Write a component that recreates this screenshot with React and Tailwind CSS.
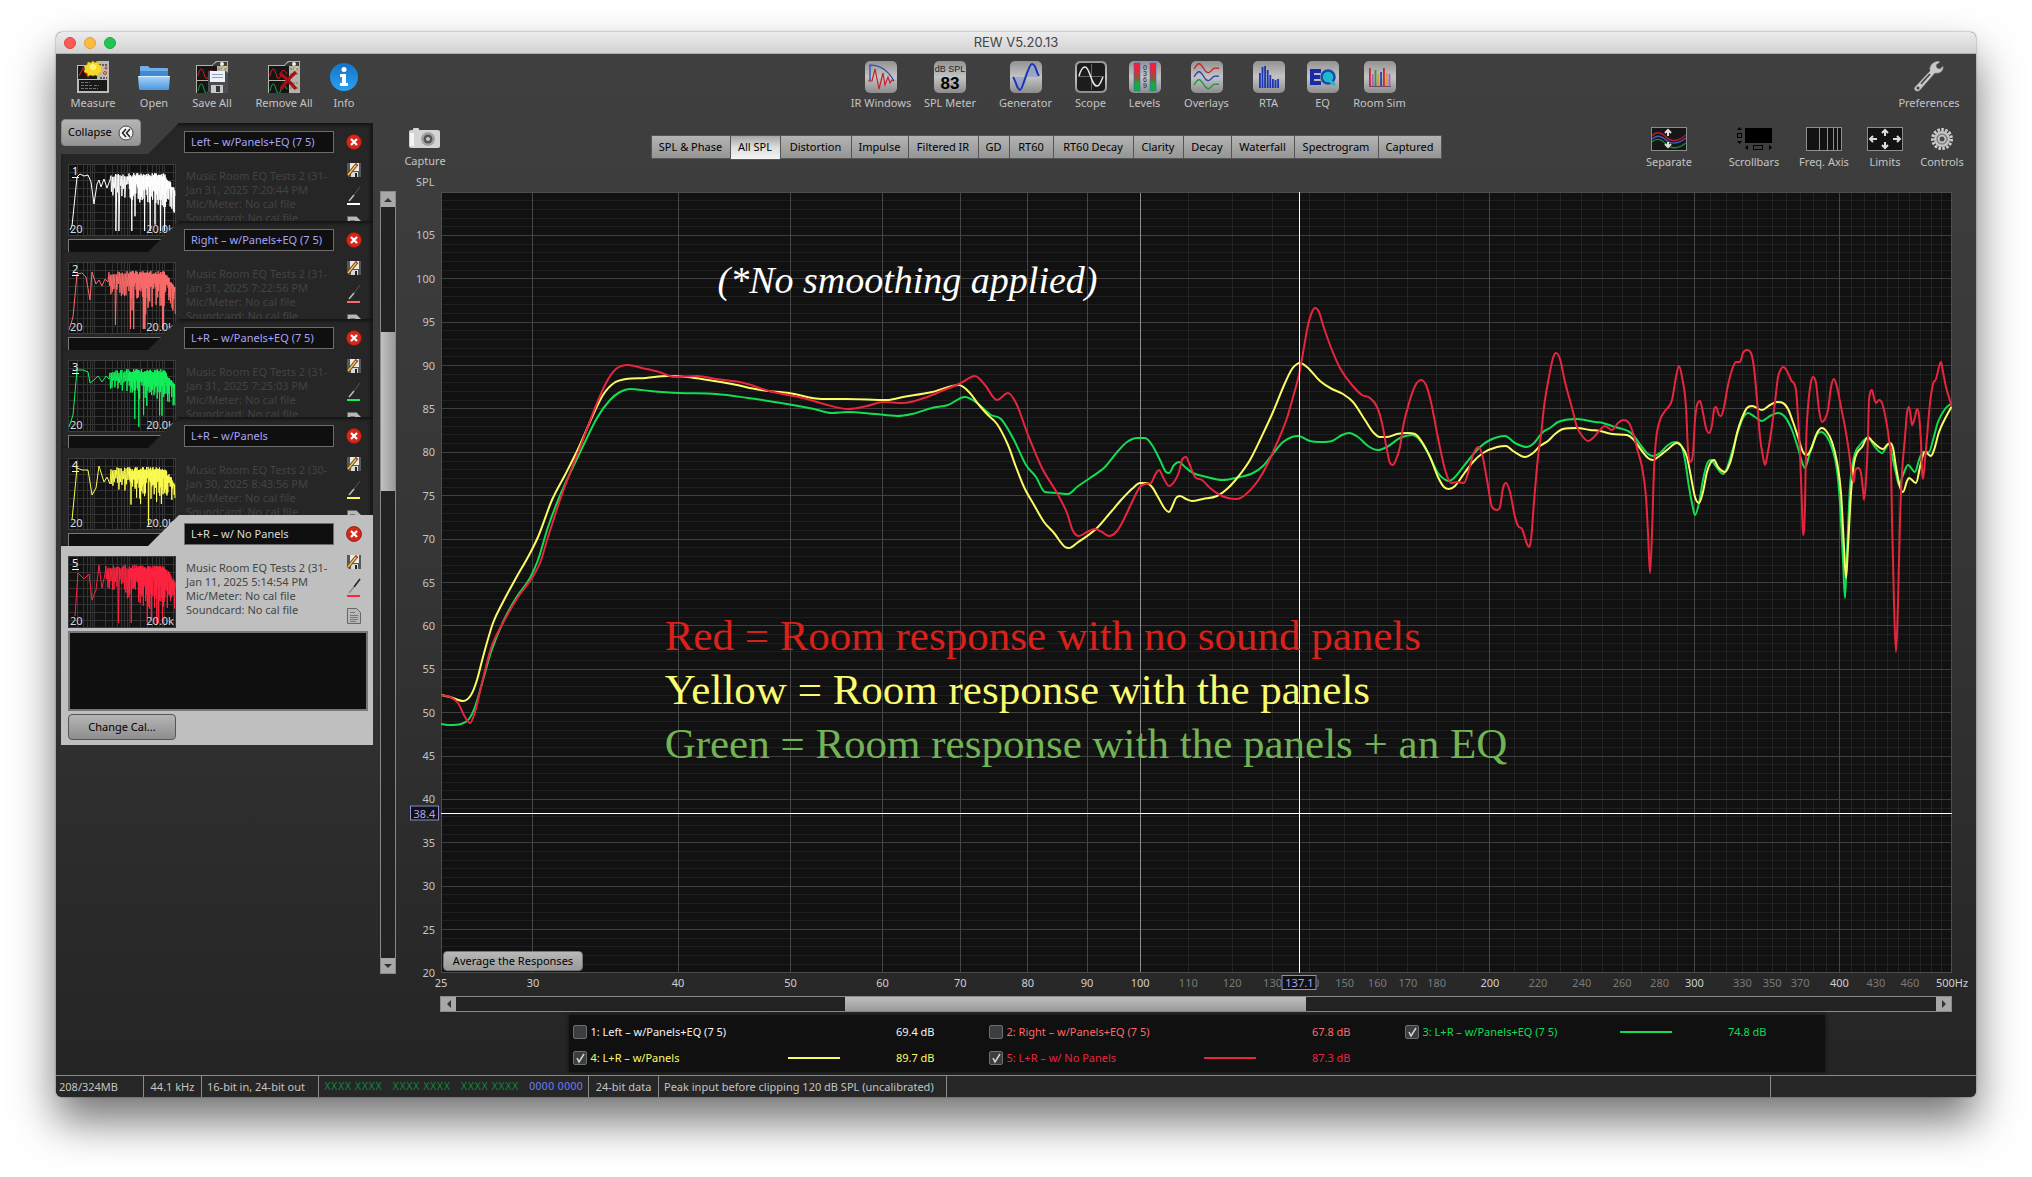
import React, { useState } from 'react';

const RED = '#e8253f';
const YELLOW = '#fbfb66';
const GREEN = '#12dd54';

/* ---------- chart data, in plot units (1511 x 781) ---------- */

const redCurve = [
  [0, 503], [9, 505], [17, 511], [24, 525], [29, 531], [34, 520], [40, 495], [50, 456], [62, 431], [77, 405], [91, 386], [99, 371],
  [107, 345], [120, 305], [130, 278], [140, 253], [152, 221], [165, 191], [175, 177], [187, 173], [201, 176], [218, 180], [234, 185],
  [256, 184], [275, 187], [303, 191], [328, 199], [362, 206], [383, 212], [407, 217], [426, 214], [442, 210], [462, 211], [483, 206],
  [503, 198], [520, 191], [534, 184], [544, 193], [556, 208], [567, 201], [575, 211], [587, 243], [601, 276], [616, 301], [626, 321],
  [632, 339], [638, 344], [646, 340], [654, 337], [661, 340], [668, 344], [676, 339], [684, 325], [691, 310], [699, 295], [704, 292],
  [710, 291], [714, 283], [718, 278], [722, 285], [728, 294], [733, 290], [738, 280], [741, 268], [745, 265], [748, 271], [754, 285],
  [761, 288], [769, 296], [779, 303], [787, 306], [796, 307], [804, 303], [816, 290], [826, 273], [836, 251], [846, 226], [854, 198],
  [858, 183], [862, 161], [867, 133], [871, 120], [874, 116], [878, 120], [882, 133], [889, 153], [899, 176], [911, 193], [921, 203],
  [929, 206], [936, 215], [941, 231], [946, 258], [949, 271], [952, 273], [954, 270], [959, 255], [962, 235], [968, 211], [974, 194],
  [980, 188], [985, 193], [990, 210], [996, 241], [1001, 265], [1005, 281], [1010, 291], [1016, 290], [1023, 291], [1027, 281],
  [1032, 263], [1037, 255], [1041, 262], [1046, 288], [1051, 315], [1056, 318], [1059, 315], [1062, 296], [1065, 291], [1069, 300],
  [1074, 325], [1077, 334], [1081, 337], [1086, 352], [1088, 355], [1090, 348], [1093, 310], [1097, 265], [1100, 243], [1103, 215],
  [1107, 190], [1112, 166], [1115, 161], [1119, 167], [1124, 190], [1131, 216], [1136, 235], [1142, 245], [1147, 249], [1152, 246],
  [1158, 239], [1164, 234], [1171, 238], [1177, 231], [1182, 228], [1188, 231], [1192, 241], [1197, 260], [1201, 275], [1205, 305],
  [1207, 341], [1209, 381], [1211, 341], [1213, 278], [1215, 248], [1219, 228], [1224, 219], [1231, 208], [1235, 185], [1238, 174],
  [1241, 185], [1245, 215], [1247, 258], [1249, 270], [1252, 261], [1254, 228], [1256, 213], [1259, 209], [1262, 221], [1265, 236],
  [1268, 241], [1271, 233], [1273, 218], [1275, 215], [1278, 223], [1280, 224], [1283, 215], [1287, 193], [1292, 175], [1295, 170],
  [1299, 170], [1302, 161], [1306, 158], [1310, 161], [1313, 176], [1316, 208], [1319, 245], [1322, 265], [1324, 273], [1326, 265],
  [1330, 241], [1334, 210], [1337, 185], [1340, 177], [1342, 175], [1346, 179], [1350, 188], [1355, 198], [1357, 225], [1359, 261],
  [1361, 315], [1362, 343], [1364, 315], [1365, 255], [1367, 215], [1370, 190], [1372, 185], [1375, 191], [1378, 218], [1381, 230],
  [1384, 227], [1387, 218], [1390, 195], [1393, 187], [1396, 195], [1400, 215], [1404, 235], [1408, 260], [1411, 285], [1413, 290],
  [1414, 279], [1417, 276], [1420, 281], [1422, 298], [1423, 308], [1425, 288], [1427, 245], [1428, 208], [1431, 198], [1433, 206],
  [1435, 211], [1438, 208], [1441, 211], [1445, 228], [1448, 248], [1450, 271], [1451, 328], [1453, 411], [1455, 460], [1457, 411],
  [1459, 328], [1461, 281], [1464, 245], [1466, 221], [1468, 215], [1470, 226], [1471, 233], [1474, 225], [1476, 217], [1478, 223],
  [1480, 251], [1481, 278], [1482, 287], [1484, 268], [1486, 245], [1489, 211], [1492, 192], [1495, 187], [1498, 175], [1500, 170],
  [1502, 180], [1505, 195], [1511, 215],
];

const yellowCurve = [
  [0, 503], [9, 505], [22, 509], [30, 503], [36, 488], [42, 465], [52, 431], [62, 410], [75, 386], [87, 365], [97, 345], [111, 308],
  [124, 283], [138, 255], [152, 223], [162, 203], [173, 191], [185, 187], [205, 186], [226, 184], [246, 185], [267, 188], [291, 192],
  [320, 198], [348, 201], [381, 207], [405, 207], [446, 208], [462, 205], [491, 200], [518, 193], [528, 200], [538, 213], [546, 222],
  [556, 232], [567, 253], [575, 275], [583, 295], [593, 313], [603, 330], [613, 341], [624, 355], [628, 356], [636, 351], [656, 336],
  [669, 321], [681, 307], [692, 296], [699, 291], [705, 291], [711, 295], [717, 305], [724, 317], [728, 320], [731, 315], [735, 306],
  [739, 304], [745, 307], [751, 309], [762, 307], [776, 304], [786, 297], [797, 285], [809, 268], [819, 248], [832, 220], [844, 191],
  [851, 177], [856, 172], [859, 171], [866, 175], [879, 189], [891, 197], [902, 202], [912, 210], [924, 228], [932, 240], [939, 245],
  [946, 245], [956, 242], [966, 241], [974, 242], [981, 250], [989, 265], [997, 285], [1003, 295], [1008, 297], [1014, 294],
  [1022, 283], [1032, 270], [1042, 261], [1056, 255], [1065, 254], [1072, 259], [1084, 265], [1092, 261], [1099, 254], [1107, 249],
  [1114, 242], [1122, 237], [1136, 236], [1149, 238], [1159, 239], [1171, 242], [1186, 243], [1192, 247], [1201, 259], [1207, 266],
  [1212, 268], [1217, 265], [1226, 258], [1236, 251], [1241, 255], [1246, 265], [1250, 285], [1254, 305], [1258, 311], [1262, 300],
  [1266, 280], [1270, 270], [1273, 268], [1277, 275], [1284, 280], [1289, 271], [1292, 260], [1296, 241], [1301, 226], [1306, 216],
  [1311, 214], [1321, 218], [1329, 213], [1336, 210], [1342, 211], [1347, 217], [1352, 230], [1357, 245], [1362, 260], [1366, 263],
  [1371, 255], [1376, 241], [1381, 236], [1386, 240], [1391, 250], [1396, 270], [1400, 301], [1403, 355], [1405, 386], [1407, 355],
  [1410, 301], [1413, 271], [1416, 261], [1421, 255], [1427, 245], [1432, 250], [1442, 257], [1446, 253], [1449, 251], [1452, 256],
  [1455, 275], [1459, 295], [1462, 300], [1466, 289], [1468, 286], [1475, 291], [1479, 275], [1482, 263], [1484, 260], [1490, 264],
  [1493, 258], [1498, 240], [1506, 223], [1511, 214],
];

const greenCurve = [
  [0, 532], [9, 533], [20, 532], [28, 527], [34, 515], [42, 488], [50, 460], [62, 430], [75, 406], [89, 386], [97, 368], [107, 335],
  [120, 301], [132, 275], [144, 250], [156, 226], [169, 208], [179, 200], [189, 197], [209, 199], [238, 201], [275, 202], [307, 206],
  [340, 211], [373, 217], [391, 221], [407, 220], [434, 222], [456, 224], [471, 222], [491, 216], [507, 213], [524, 205], [536, 211],
  [550, 223], [560, 227], [573, 248], [585, 273], [595, 285], [604, 300], [616, 301], [627, 302], [636, 295], [649, 286], [664, 275],
  [677, 259], [686, 250], [696, 246], [704, 246], [711, 253], [719, 268], [725, 280], [728, 281], [733, 273], [738, 270], [744, 275],
  [752, 281], [766, 285], [781, 288], [799, 285], [812, 281], [822, 274], [831, 263], [842, 250], [851, 245], [857, 244], [869, 249],
  [881, 250], [891, 249], [901, 243], [908, 241], [917, 245], [927, 254], [937, 258], [946, 255], [959, 246], [971, 243], [977, 246],
  [987, 261], [997, 281], [1003, 287], [1008, 289], [1014, 285], [1026, 270], [1039, 255], [1049, 248], [1064, 244], [1074, 251],
  [1086, 255], [1092, 252], [1102, 240], [1109, 236], [1117, 230], [1136, 227], [1154, 230], [1162, 231], [1174, 235], [1187, 239],
  [1192, 243], [1201, 255], [1207, 262], [1212, 264], [1219, 261], [1227, 253], [1234, 250], [1240, 253], [1244, 268], [1248, 295],
  [1252, 316], [1254, 323], [1258, 311], [1262, 288], [1266, 272], [1270, 268], [1274, 273], [1282, 282], [1286, 276], [1291, 260],
  [1296, 243], [1301, 228], [1307, 221], [1314, 225], [1321, 229], [1329, 224], [1337, 221], [1344, 225], [1351, 238], [1357, 256],
  [1362, 273], [1364, 276], [1368, 264], [1374, 246], [1380, 240], [1386, 245], [1391, 256], [1396, 278], [1399, 311], [1402, 368],
  [1404, 406], [1406, 361], [1409, 295], [1413, 265], [1419, 253], [1427, 246], [1434, 255], [1441, 261], [1448, 252], [1452, 268],
  [1456, 286], [1458, 293], [1462, 283], [1467, 273], [1474, 280], [1478, 268], [1482, 260], [1488, 260], [1492, 248], [1497, 230],
  [1504, 217], [1511, 211],
];

// Monotone cubic through the points, so peaks never overshoot
const smoothPath = (pts) => {
  const n = pts.length;
  const d = [];
  for (let i = 0; i < n - 1; i++) d.push((pts[i + 1][1] - pts[i][1]) / (pts[i + 1][0] - pts[i][0]));
  const m = pts.map((_, i) => {
    if (i === 0) return d[0];
    if (i === n - 1) return d[n - 2];
    if (d[i - 1] * d[i] <= 0) return 0;
    const mean = (d[i - 1] + d[i]) / 2;
    return Math.sign(mean) * Math.min(Math.abs(mean), 3 * Math.abs(d[i - 1]), 3 * Math.abs(d[i]));
  });
  let out = `M${pts[0][0]},${pts[0][1]}`;
  for (let i = 0; i < n - 1; i++) {
    const [x0, y0] = pts[i];
    const [x1, y1] = pts[i + 1];
    const h = (x1 - x0) / 3;
    out += `C${(x0 + h).toFixed(1)},${(y0 + m[i] * h).toFixed(1)} ${(x1 - h).toFixed(1)},${(y1 - m[i + 1] * h).toFixed(1)} ${x1},${y1}`;
  }
  return out;
};

const PLOT_W = 1511;
const PLOT_H = 781;
const freqPos = (f) => Math.log(f / 25) / Math.log(20);
const splPos = (db) => (110 - db) / 90;

const range = (from, to, step) => {
  const out = [];
  for (let v = from; v <= to; v += step) out.push(v);
  return out;
};

const majorFreqs = [30, 40, 50, 60, 70, 80, 90, 200, 300, 400];
const minorFreqs = range(110, 490, 10).filter((f) => f % 100 !== 0);
const freqLabels = [25, 30, 40, 50, 60, 70, 80, 90, 100, 110, 120, 130, 140, 150, 160, 170, 180, 200, 220, 240, 260, 280, 300, 330, 350, 370, 400, 430, 460, 500];
const isDimFreq = (f) => f > 100 && f % 100 !== 0;

/* ---------- toolbar icons ---------- */

const Tile = ({ children, dark }) => (
  <svg viewBox="0 0 32 32" className="h-8 w-8">
    <defs>
      <linearGradient id="tileFill" x1="0" y1="0" x2="0" y2="1">
        <stop offset="0" stopColor="#929292" />
        <stop offset="0.5" stopColor="#c4c4c4" />
        <stop offset="1" stopColor="#8c8c8c" />
      </linearGradient>
    </defs>
    <rect width="32" height="32" rx="5" fill="url(#tileFill)" />
    {dark && <rect x="2" y="2" width="28" height="28" rx="4" fill="#1c1c1c" />}
    {children}
  </svg>
);

const MiniScreen = ({ y, color }) => (
  <>
    <rect x="1" y={y} width="20" height="14" fill="#151515" />
    <path d={`M2 ${y + 10}c2-9 4-9 6-2s4 5 5 0 3-5 6 0`} fill="none" stroke={color} strokeWidth="1.2" />
  </>
);

const DeviceBase = () => (
  <>
    <path d="M0 4h16l4-4h12v32H0z" fill="#b5b2aa" />
    <path d="M17 4l4-3h10v4H17z" fill="#3b3b3b" />
    <circle cx="26" cy="3" r="2" fill="#f3eee2" />
    <MiniScreen y={5} color="#b01c1c" />
    <MiniScreen y={20} color="#178446" />
    <path d="M22 8h9M22 13h9M22 22h9M22 27h9" stroke="#77736a" strokeWidth="1" strokeDasharray="2 1" />
    <path d="M26 9l4-4" stroke="#e9cf52" strokeWidth="1.5" />
  </>
);

const MeasureIcon = () => (
  <svg viewBox="0 0 32 32" className="h-8 w-8">
    <path d="M0 4h16l4-4h12v32H0z" fill="#bdbab4" />
    <rect x="1" y="5" width="19" height="13" fill="#1a1a1a" />
    <path d="M2 15l4-8 5 9 4-6" fill="none" stroke="#c22020" strokeWidth="1.2" />
    <path d="M22 4h8M23 17h7" stroke="#5c5c5c" strokeWidth="2" strokeDasharray="2 1" />
    <circle cx="29" cy="7" r="1.5" fill="#e04040" />
    <circle cx="28" cy="12" r="1.5" fill="none" stroke="#c33" />
    <rect x="2" y="19" width="28" height="11" fill="#191919" />
    <path d="M4 21.5h9M4 24.5h12M4 27.5h17M17 24.5h5" stroke="#8b8b8b" strokeWidth="0.8" strokeDasharray="3 1" />
    <path d="M16 0l2 2 3-1 1 3 3 1-1 3 1 3-3 1-1 3-3-1-2 1-2-1-3 1-1-3-3-1 1-3-1-3 3-1 1-3 3 1z" fill="#f8d827" stroke="#e0b110" strokeWidth="0.5" />
    <circle cx="16" cy="6" r="3" fill="#fff27a" />
  </svg>
);

const OpenIcon = () => (
  <svg viewBox="0 0 32 32" className="h-8 w-8">
    <defs>
      <linearGradient id="folder" x1="0" y1="0" x2="0" y2="1">
        <stop offset="0" stopColor="#a8d6fb" />
        <stop offset="1" stopColor="#4a97dc" />
      </linearGradient>
    </defs>
    <path d="M2 6q0-1 1-1h7l2 2h17q1 0 1 1v8H2z" fill="#6fb0ec" />
    <path d="M2 10h28v5H2z" fill="#4389cf" />
    <path d="M0 15h32l-1 13q0 1-1 1H2q-1 0-1-1z" fill="url(#folder)" />
    <path d="M0 15.5h32" stroke="#d8eeff" />
  </svg>
);

const SaveAllIcon = () => (
  <svg viewBox="0 0 32 32" className="h-8 w-8">
    <DeviceBase />
    <path d="M12 10h18l2 2v20H14l-2-2z" fill="#4a4d52" />
    <rect x="14" y="10" width="15" height="11" fill="#eef2f8" />
    <path d="M16 13.5h11M16 16.5h11" stroke="#8ba1bb" />
    <rect x="15" y="24" width="12" height="8" fill="#c9c9c9" />
    <rect x="20" y="25" width="4" height="6" fill="#35373a" />
  </svg>
);

const RemoveAllIcon = () => (
  <svg viewBox="0 0 32 32" className="h-8 w-8">
    <DeviceBase />
    <path d="M12 12c5 4 11 10 16 16M28 11c-6 5-11 11-15 17" stroke="#a80e14" strokeWidth="3.5" fill="none" />
  </svg>
);

const InfoIcon = () => (
  <svg viewBox="0 0 32 32" className="h-8 w-8">
    <defs>
      <linearGradient id="info" x1="0" y1="0" x2="0" y2="1">
        <stop offset="0" stopColor="#1672c4" />
        <stop offset="1" stopColor="#27a3f2" />
      </linearGradient>
    </defs>
    <circle cx="16" cy="16" r="14" fill="url(#info)" />
    <circle cx="16" cy="8.5" r="2.5" fill="#fff" />
    <path d="M12 13h6v9h2v3h-8v-3h2v-6h-2z" fill="#fff" />
  </svg>
);

const IrIcon = () => (
  <Tile>
    <path d="M5 20V4q15 0 24 16" fill="none" stroke="#2440b8" strokeWidth="1.2" />
    <path d="M3 20h4l3-12 4 20 4-16 2 12 3-8 2 6 2-3 2 1" fill="none" stroke="#c8202a" strokeWidth="1.2" />
  </Tile>
);
const SplIcon = () => (
  <Tile>
    <text x="16" y="11" textAnchor="middle" fontSize="9" fontFamily="Liberation Sans, sans-serif" fill="#222">dB SPL</text>
    <text x="16" y="28" textAnchor="middle" fontSize="17" fontWeight="700" fontFamily="Liberation Sans, sans-serif" fill="#000">83</text>
  </Tile>
);
const GeneratorIcon = () => (
  <Tile>
    <path d="M4 16h12q-3 13-6 13t-6-13zM16 16q3-13 6-13t6 13z" fill="#8f9ccb" opacity="0.7" />
    <path d="M3 16c3 4 4 13 7 13S18 3 22 3s4 8 7 12" fill="none" stroke="#1b35b5" strokeWidth="2" />
  </Tile>
);
const ScopeIcon = () => (
  <Tile dark>
    <path d="M3 15.5h26M16.5 3v26" stroke="#777" strokeWidth="0.8" />
    <path d="M4 15C6 8 8 6 10 6c5 0 6 19 12 19 3 0 4-5 6-9" fill="none" stroke="#e6e6e6" strokeWidth="1.5" />
  </Tile>
);
const LevelsIcon = () => (
  <Tile>
    <defs>
      <linearGradient id="level" x1="0" y1="0" x2="0" y2="1">
        <stop offset="0.2" stopColor="#f2203a" />
        <stop offset="0.55" stopColor="#8a5a32" />
        <stop offset="0.75" stopColor="#0fae3e" />
      </linearGradient>
    </defs>
    <rect x="5" y="2" width="6" height="28" fill="url(#level)" stroke="#4062d8" strokeWidth="0.6" />
    <rect x="21" y="2" width="6" height="28" fill="url(#level)" stroke="#4062d8" strokeWidth="0.6" />
    {['0', '3', '6', '9'].map((t, i) => (
      <text key={t} x="16" y={9 + i * 6} textAnchor="middle" fontSize="7" fontFamily="Liberation Sans, sans-serif" fill="#222">{t}</text>
    ))}
  </Tile>
);
const OverlaysIcon = () => (
  <Tile>
    {[['#c7242c', 0], ['#2440b8', 8], ['#1c9440', 16]].map(([c, dy]) => (
      <path key={c} d={`M3 ${8 + dy}c4-7 6-7 10 0s7 2 9 0 4 0 6-1`} fill="none" stroke={c} strokeWidth="1.3" />
    ))}
  </Tile>
);
const RtaIcon = () => (
  <Tile>
    {[15, 21, 22, 18, 13, 9, 8, 9].map((h, i) => (
      <rect key={i} x={6 + i * 2.6} y={27 - h} width="1.8" height={h} fill="#1b35b5" />
    ))}
  </Tile>
);
const EqIcon = () => (
  <Tile>
    <path d="M3 8h11v4H7v2h6v4H7v2h7v4H3z" fill="#1b2ba8" />
    <circle cx="21" cy="16" r="6.5" fill="#1fb9cf" stroke="#1b4aa8" strokeWidth="2.5" />
    <path d="M23 20l5 4" stroke="#1fb9cf" strokeWidth="3" />
  </Tile>
);
const RoomSimIcon = () => (
  <Tile>
    {[['#d2232f', 18], ['#b05cc4', 12], ['#249a3c', 16], ['#d59a2a', 12], ['#2b3fc0', 14], ['#d2232f', 18], ['#d59a2a', 13], ['#b05cc4', 12]].map(([c, h], i) => (
      <rect key={i} x={5 + i * 2.8} y={25 - h} width="1.8" height={h} fill={c} />
    ))}
    <path d="M5 25.5h22" stroke="#6b4a6b" />
  </Tile>
);
const PreferencesIcon = () => (
  <svg viewBox="0 0 32 32" className="h-8 w-8">
    <path d="M3 30q-3-2-1-4L17 10q-1-3 1-6 2-3 7-4l2 1-4 3 1 3 3 1 3-3q1 3-2 6-3 2-6 1L7 29q-2 2-4 1z" fill="#c9c9c9" stroke="#767676" strokeWidth="0.6" />
    <path d="M8 23l9-10" stroke="#3b3b3b" strokeWidth="1.5" />
    <circle cx="5" cy="27" r="1.5" fill="#3d3d3d" />
  </svg>
);

const CameraIcon = () => (
  <svg viewBox="0 0 32 20" className="h-5 w-8">
    <rect x="4" y="0" width="6" height="3" rx="1" fill="#d8d8d8" />
    <rect x="0" y="2" width="31" height="18" rx="2" fill="#d4d4d4" />
    <rect x="1" y="5" width="4" height="13" fill="#f4f4f4" />
    <circle cx="19" cy="11" r="7" fill="#a3a3a3" />
    <circle cx="19" cy="11" r="4.5" fill="#555" />
    <circle cx="19" cy="11" r="2" fill="#c7c7c7" />
  </svg>
);
const SeparateIcon = () => (
  <svg viewBox="0 0 36 24" className="h-6 w-9">
    <rect x="0.5" y="0.5" width="35" height="23" fill="#161616" stroke="#8d8d8d" />
    <path d="M1 9q6-7 14 1t20-2" fill="none" stroke="#b02028" strokeWidth="1.3" />
    <path d="M1 12q6-6 14 1t20-2" fill="none" stroke="#4858c0" strokeWidth="1.3" />
    <path d="M1 15q6-6 14 2t20-1" fill="none" stroke="#18883a" strokeWidth="1.3" />
    <path d="M17 9V3m-3 3l3-3 3 3M17 15v5m-3-3l3 3 3-3" fill="none" stroke="#dcdcdc" strokeWidth="2" />
  </svg>
);
const ScrollbarsIcon = () => (
  <svg viewBox="0 0 36 24" className="h-6 w-9">
    <rect x="9" y="1" width="27" height="15" fill="#000" />
    <rect x="1.5" y="6.5" width="4" height="4" fill="none" stroke="#000" />
    <path d="M1 3l2.5-3L6 3zM1 14l2.5 3L6 14zM12 18v5l-3-2.5zM33 18v5l3-2.5z" fill="#000" />
    <rect x="17.5" y="18.5" width="9" height="4" fill="none" stroke="#000" />
  </svg>
);
const FreqAxisIcon = () => (
  <svg viewBox="0 0 36 24" className="h-6 w-9">
    <rect x="0.5" y="0.5" width="35" height="23" fill="#121212" stroke="#8d8d8d" />
    <path d="M13.5 1v22M21.5 1v22M27.5 1v22M31.5 1v22" stroke="#8d8d8d" />
  </svg>
);
const LimitsIcon = () => (
  <svg viewBox="0 0 36 24" className="h-6 w-9">
    <rect x="0.5" y="0.5" width="35" height="23" fill="#121212" stroke="#8d8d8d" />
    <path d="M18 9V3m-3 3l3-3 3 3M18 15v6m-3-3l3 3 3-3M10 12H3m3-3l-3 3 3 3M26 12h7m-3-3l3 3-3 3" fill="none" stroke="#dcdcdc" strokeWidth="2" />
  </svg>
);
const ControlsIcon = () => (
  <svg viewBox="0 0 24 24" className="h-6 w-6">
    <circle cx="12" cy="12" r="9.5" fill="none" stroke="#cfcfcf" strokeWidth="3" strokeDasharray="2.5 1.48" />
    <circle cx="12" cy="12" r="8" fill="#c4c4c4" />
    <circle cx="12" cy="12" r="5" fill="none" stroke="#808080" strokeWidth="1.5" />
    <circle cx="12" cy="12" r="2.5" fill="#4a4a4a" />
  </svg>
);

/* ---------- toolbar ---------- */

const fileTools = [
  { label: 'Measure', icon: MeasureIcon, width: 'w-16' },
  { label: 'Open', icon: OpenIcon, width: 'w-[58px]' },
  { label: 'Save All', icon: SaveAllIcon, width: 'w-[58px]' },
  { label: 'Remove All', icon: RemoveAllIcon, width: 'w-[86px]' },
  { label: 'Info', icon: InfoIcon, width: 'w-[34px]' },
];

const viewTools = [
  { label: 'IR Windows', icon: IrIcon, width: 'w-[69px]' },
  { label: 'SPL Meter', icon: SplIcon, width: 'w-[69px]' },
  { label: 'Generator', icon: GeneratorIcon, width: 'w-[82px]' },
  { label: 'Scope', icon: ScopeIcon, width: 'w-[48px]' },
  { label: 'Levels', icon: LevelsIcon, width: 'w-[60px]' },
  { label: 'Overlays', icon: OverlaysIcon, width: 'w-[64px]' },
  { label: 'RTA', icon: RtaIcon, width: 'w-[60px]' },
  { label: 'EQ', icon: EqIcon, width: 'w-[48px]' },
  { label: 'Room Sim', icon: RoomSimIcon, width: 'w-[66px]' },
];

const chartTools = [
  { label: 'Separate', icon: SeparateIcon, width: 'w-[46px] mr-[30px]' },
  { label: 'Scrollbars', icon: ScrollbarsIcon, width: 'w-[64px]' },
  { label: 'Freq. Axis', icon: FreqAxisIcon, width: 'w-[76px]' },
  { label: 'Limits', icon: LimitsIcon, width: 'w-[46px]' },
  { label: 'Controls', icon: ControlsIcon, width: 'w-[68px]' },
];

const ToolButton = ({ label, icon: Icon, width }) => (
  <button type="button" className={`flex flex-col items-center gap-[3px] whitespace-nowrap leading-[14px] text-[#c4c4c4] ${width}`}>
    <Icon />
    {label}
  </button>
);

const tabs = [
  ['SPL & Phase', 'w-[79px]'], ['All SPL', 'w-[50px]'], ['Distortion', 'w-[71px]'], ['Impulse', 'w-[57px]'], ['Filtered IR', 'w-[70px]'],
  ['GD', 'w-[31px]'], ['RT60', 'w-[44px]'], ['RT60 Decay', 'w-[80px]'], ['Clarity', 'w-[50px]'], ['Decay', 'w-[48px]'],
  ['Waterfall', 'w-[63px]'], ['Spectrogram', 'w-[84px]'], ['Captured', 'w-[64px]'],
];

/* ---------- measurement cards ---------- */

const measurements = [
  { id: 1, name: 'Left – w/Panels+EQ (7 5)', file: 'Music Room EQ Tests 2 (31-', date: 'Jan 31, 2025 7:20:44 PM', color: '#ffffff', text: '#f4f4f4', level: '69.4 dB', lead: [[2, 66], [4, 62], [9, 13], [12, 10], [16, 12], [20, 11], [23, 18], [26, 40], [29, 20], [31, 16], [33, 23], [36, 15], [39, 24], [42, 16]], depth: 1 },
  { id: 2, name: 'Right – w/Panels+EQ (7 5)', file: 'Music Room EQ Tests 2 (31-', date: 'Jan 31, 2025 7:22:56 PM', color: '#fb6a6a', text: '#fb6a6a', level: '67.8 dB', lead: [[1, 68], [5, 55], [9, 12], [14, 11], [18, 15], [22, 38], [24, 10], [28, 22], [31, 18], [34, 24], [37, 17], [40, 20]], depth: 1.15 },
  { id: 3, name: 'L+R – w/Panels+EQ (7 5)', file: 'Music Room EQ Tests 2 (31-', date: 'Jan 31, 2025 7:25:03 PM', color: '#12f05a', text: GREEN, level: '74.8 dB', lead: [[1, 67], [5, 55], [9, 10], [15, 10], [20, 12], [22, 23], [26, 20], [30, 16], [34, 22], [38, 16], [41, 19]], depth: 0.8, line: true },
  { id: 4, name: 'L+R – w/Panels', file: 'Music Room EQ Tests 2 (30-', date: 'Jan 30, 2025 8:43:56 PM', color: '#fbfb50', text: YELLOW, level: '89.7 dB', lead: [[4, 62], [9, 10], [14, 12], [20, 12], [24, 37], [28, 30], [31, 8], [36, 24], [39, 19], [42, 26]], depth: 0.85, line: true },
  { id: 5, name: 'L+R – w/ No Panels', file: 'Music Room EQ Tests 2 (31-', date: 'Jan 11, 2025 5:14:54 PM', color: '#ff2340', text: RED, level: '87.3 dB', lead: [[7, 60], [10, 17], [16, 23], [21, 18], [24, 44], [28, 34], [31, 9], [34, 32], [37, 18]], depth: 1.4, line: true },
];

// Low end is a fixed lead-in, the rest is dense comb-like noise with a few deep notches
const thumbPath = ({ id, lead, depth }) => {
  let seed = id * 7919;
  const rand = () => {
    seed = (seed * 16807) % 2147483647;
    return seed / 2147483647;
  };
  const pts = [...lead];
  for (let x = lead[lead.length - 1][0] + 1; x < 107; x += x < 60 ? 1.5 : 0.8) {
    const fade = x > 96 ? (x - 96) * 1.4 : 0;
    const spread = x < 50 ? 12 : x < 70 ? 16 : 24;
    const notch = rand() > 0.82 && x > 44 && x < 98 ? 16 + 30 * rand() : 0;
    pts.push([x, 9 + rand() * 4 + fade]);
    pts.push([x + 0.4, Math.min(67, 20 + rand() * spread * depth + notch * depth + fade / 2)]);
  }
  return 'M' + pts.map(([x, y]) => `${x.toFixed(1)},${y.toFixed(1)}`).join('L');
};

const Thumbnail = ({ item }) => (
  <svg viewBox="0 0 108 72" className="h-[72px] w-[108px] shrink-0 text-[11px]">
    <rect x="0.5" y="0.5" width="107" height="71" fill="#121212" stroke="#3c3c3c" />
    <g stroke="#333333" shapeRendering="crispEdges">
      {range(8, 68, 8).map((y) => <path key={y} d={`M1 ${y}h106`} />)}
      {[9, 15, 19, 22, 24, 26, 37, 44, 49, 53, 56, 59, 61, 72, 79, 84, 88, 91, 94, 96, 105].map((x) => <path key={x} d={`M${x} 1v70`} />)}
    </g>
    <path d={thumbPath(item)} fill="none" stroke={item.color} strokeWidth="1" strokeLinejoin="round" />
    <text x="4" y="11" fill="#f2f2f2">{item.id}</text>
    <path d="M4 13.5h7" stroke="#f2f2f2" />
    <text x="2" y="69" fill="#d8d8d8">20</text>
    <text x="106" y="69" textAnchor="end" fill="#d8d8d8">20.0k</text>
  </svg>
);

const CloseIcon = () => (
  <svg viewBox="0 0 16 16" className="h-4 w-4">
    <circle cx="8" cy="8" r="7.5" fill="#d3281c" stroke="#8e150e" strokeWidth="0.8" />
    <path d="M5 5l6 6M11 5l-6 6" stroke="#fff" strokeWidth="2.2" />
  </svg>
);
const SaveIcon = () => (
  <svg viewBox="0 0 16 16" className="h-4 w-4">
    <path d="M1 1h14v14H3l-2-2z" fill="#56585a" />
    <rect x="4" y="1" width="9" height="8" fill="#e9e9e9" />
    <rect x="5" y="10" width="7" height="5" fill="#dadada" />
    <rect x="9" y="11" width="2" height="4" fill="#222" />
    <path d="M2 13L11 2" stroke="#6b4a12" strokeWidth="3.5" />
    <path d="M2 13L11 2" stroke="#f0c05a" strokeWidth="1.5" />
    <path d="M10 3l1-1" stroke="#d03020" strokeWidth="2" />
  </svg>
);
const BrushIcon = ({ color, dark }) => (
  <svg viewBox="0 0 14 20" className="h-5 w-[14px]">
    <path d="M13 1L7 9" stroke={dark ? '#555' : '#222'} strokeWidth={dark ? '1' : '1.5'} />
    <path d="M7 9l-5 6" stroke={dark ? '#bdbdbd' : '#8c8c8c'} strokeWidth="1.5" />
    <rect x="0" y="17" width="13" height="2" fill={color} />
  </svg>
);
const NoteIcon = () => (
  <svg viewBox="0 0 14 16" className="h-4 w-[14px]">
    <path d="M0.5 0.5h9l4 4v11h-13z" fill="#b8b8b8" stroke="#666" />
    <path d="M3 4.5h5M3 7.5h8M3 9.5h8M3 11.5h8M3 13.5h6" stroke="#777" />
  </svg>
);

const MeasurementCard = ({ item, active, onSelect }) => (
  <article
    onClick={onSelect}
    className={`w-[312px] [clip-path:polygon(0_31px,87px_31px,118px_0,100%_0,100%_100%,0_100%)] ${
      active ? 'h-[230px] bg-[#bfbfbf]' : 'h-[129px] -mb-[31px] bg-[#262626] shadow-[inset_0_2px_3px_#151515,inset_-3px_0_3px_#1a1a1a]'
    } overflow-hidden px-[7px]`}
  >
    <div className="flex h-[116px]">
      <div className="pt-[41px]">
        <Thumbnail item={item} />
      </div>
      <div className="ml-2 w-[150px] pt-2">
        <input
          type="text"
          aria-label={`Measurement ${item.id} name`}
          defaultValue={item.name}
          ref={(el) => { if (el) el.scrollLeft = el.scrollWidth; }}
          className={`block h-[22px] w-[150px] border border-[#6d6d6d] bg-[#0f0f0f] px-[6px] pb-[2px] outline-none ${active ? 'text-[#dcdcdc]' : 'text-[#a9a4f5]'}`}
        />
        <div className={`mt-4 overflow-hidden whitespace-nowrap pl-[2px] leading-[14px] ${active ? 'text-[#454545]' : 'text-[#434343]'}`}>
          <p>{item.file}</p>
          <p>{item.date}</p>
          <p>Mic/Meter: No cal file</p>
          <p>Soundcard: No cal file</p>
        </div>
      </div>
      <div className="ml-3 flex w-4 flex-col items-center pt-[11px]">
        <button type="button" aria-label="Remove measurement"><CloseIcon /></button>
        <button type="button" aria-label="Save measurement" className="mt-3"><SaveIcon /></button>
        <button type="button" aria-label="Trace colour" className="mt-2"><BrushIcon color={item.color} dark={!active} /></button>
        <button type="button" aria-label="Notes" className="mt-[10px]"><NoteIcon /></button>
      </div>
    </div>
    {active ? (
      <>
        <textarea aria-label="Comments" className="block h-20 w-[300px] resize-none border-2 border-[#777] bg-[#0f0f0f] outline-none" />
        <button
          type="button"
          className="mt-[3px] block h-[26px] w-[108px] rounded border border-[#555] bg-linear-to-b from-[#b5b5b5] to-[#8e8e8e] text-black"
        >
          Change Cal...
        </button>
      </>
    ) : (
      <div className="h-[13px] w-[108px] border-l border-t border-[#777] bg-[#0f0f0f]" />
    )}
  </article>
);

const Arrow = ({ d }) => (
  <svg viewBox="0 0 8 8" className="h-2 w-2">
    <path d={d} fill="#333" />
  </svg>
);

/* ---------- chart ---------- */

const Plot = () => (
  <div className="relative min-w-0 flex-1 bg-[#111111]">
    <svg viewBox={`0 0 ${PLOT_W} ${PLOT_H}`} preserveAspectRatio="none" className="absolute inset-0 h-full w-full">
      <g shapeRendering="crispEdges">
        {range(21, 109, 1).filter((db) => db % 5).map((db) => (
          <path key={db} d={`M0 ${splPos(db) * PLOT_H}H${PLOT_W}`} stroke="#1f1f1f" />
        ))}
        {minorFreqs.map((f) => (
          <path key={f} d={`M${freqPos(f) * PLOT_W} 0V${PLOT_H}`} stroke="#242424" />
        ))}
        {range(25, 105, 5).map((db) => (
          <path key={db} d={`M0 ${splPos(db) * PLOT_H}H${PLOT_W}`} stroke="#3f3f3f" />
        ))}
        {majorFreqs.map((f) => (
          <path key={f} d={`M${freqPos(f) * PLOT_W} 0V${PLOT_H}`} stroke="#464646" />
        ))}
        <path d={`M${freqPos(100) * PLOT_W} 0V${PLOT_H}`} stroke="#8c8c8c" />
        <path d={`M0.5 0V${PLOT_H - 1}H${PLOT_W - 1}V0.5H0`} fill="none" stroke="#4c4c4c" />
      </g>
      <g fill="none" strokeWidth="2" strokeLinejoin="round">
        <path d={smoothPath(greenCurve)} stroke={GREEN} />
        <path d={smoothPath(yellowCurve)} stroke={YELLOW} />
        <path d={smoothPath(redCurve)} stroke={RED} />
      </g>
      <path d={`M0 ${splPos(38.4) * PLOT_H}H${PLOT_W}M${freqPos(137.1) * PLOT_W} 0V${PLOT_H}`} stroke="#ffffff" shapeRendering="crispEdges" />
    </svg>
    <p className="absolute left-[18.3%] top-[8.2%] whitespace-nowrap font-['Liberation_Serif',serif] text-[38px] italic leading-[48px] text-white">
      (*No smoothing applied)
    </p>
    <div className="absolute left-[14.8%] top-[53.4%] whitespace-nowrap font-['Liberation_Serif',serif] text-[43px] leading-[54px]">
      <p className="text-[#d8211a]">Red = Room response with no sound panels</p>
      <p className="text-[#fbfb70]">Yellow = Room response with the panels</p>
      <p className="text-[#72b356]">Green = Room response with the panels + an EQ</p>
    </div>
    <button
      type="button"
      className="absolute bottom-[2px] left-[2px] h-5 w-[140px] rounded border border-[#777] bg-linear-to-b from-[#b9b9b9] to-[#999] text-center leading-[18px] text-black"
    >
      Average the Responses
    </button>
  </div>
);

const SplAxis = () => (
  <div className="relative w-[45px] shrink-0 text-[#c4c4c4]">
    {range(20, 105, 5).map((db) => (
      <span key={db} className="absolute right-[6px] -translate-y-1/2 leading-[14px]" style={{ top: `${splPos(db) * 100}%` }}>
        {db}
      </span>
    ))}
    <span
      className="absolute right-[2px] w-[29px] -translate-y-1/2 border border-[#8f8fd8] bg-[#111] text-center leading-[13px] text-[#a9a4f5]"
      style={{ top: `${splPos(38.4) * 100}%` }}
    >
      38.4
    </span>
  </div>
);

const FreqAxis = () => (
  <div className="relative ml-[45px] h-[23px]">
    {freqLabels.map((f) => (
      <span
        key={f}
        className={`absolute top-[3px] -translate-x-1/2 leading-[14px] ${isDimFreq(f) ? 'text-[#7a7a7a]' : 'text-[#d0d0d0]'}`}
        style={{ left: `${freqPos(f) * 100}%` }}
      >
        {f === 500 ? '500Hz' : f}
      </span>
    ))}
    <span
      className="absolute top-[2px] w-[35px] -translate-x-1/2 border border-[#8f8fd8] bg-[#111] text-center leading-[13px] text-[#a9a4f5]"
      style={{ left: `${freqPos(137.1) * 100}%` }}
    >
      137.1
    </span>
  </div>
);

const LegendItem = ({ item }) => {
  const [checked, setChecked] = useState(Boolean(item.line));
  return (
    <div className="flex h-[26px] items-center pr-[54px]" style={{ color: item.text }}>
      <label className="flex w-[215px] items-center gap-1 whitespace-nowrap">
        <span className="relative h-[14px] w-[14px]">
          <input
            type="checkbox"
            checked={checked}
            onChange={(e) => setChecked(e.target.checked)}
            className="absolute inset-0 appearance-none rounded-[2px] border border-[#6c6e70] bg-[#3b3e40]"
          />
          {checked && (
            <svg viewBox="0 0 14 14" className="pointer-events-none absolute inset-0 h-[14px] w-[14px]">
              <path d="M4 7l2 4 5-8" fill="none" stroke="#d4d4d4" strokeWidth="1.5" />
            </svg>
          )}
        </span>
        {item.id}: {item.name}
      </label>
      {item.line && <span className="h-[2px] w-[52px]" style={{ backgroundColor: item.text }} />}
      <span className="ml-auto">{item.level}</span>
    </div>
  );
};

const App = () => {
  const [activeTab, setActiveTab] = useState('All SPL');
  const [selected, setSelected] = useState(5);

  return (
    <div className="flex min-h-screen flex-col bg-white px-14 pb-20 pt-8 font-['Noto_Sans',sans-serif] text-[11px]">
      <div className="flex flex-1 flex-col overflow-hidden rounded-md bg-linear-to-b from-[#404040] via-[#353535] to-[#242424] shadow-[0_0_2px_rgba(0,0,0,0.5),0_24px_44px_rgba(0,0,0,0.55)]">
        <header className="flex h-[22px] shrink-0 items-center border-b border-[#b0b0b0] bg-linear-to-b from-[#ececec] to-[#d2d2d2] px-2">
          <div className="flex gap-2">
            <span className="h-3 w-3 rounded-full border border-[#e0443e] bg-[#fc5b57]" />
            <span className="h-3 w-3 rounded-full border border-[#e0a03a] bg-[#fdbc40]" />
            <span className="h-3 w-3 rounded-full border border-[#18ac3c] bg-[#22c552]" />
          </div>
          <h1 className="flex-1 pr-[52px] pt-px text-center font-['Inter',sans-serif] text-[13px] text-[#444]">REW V5.20.13</h1>
        </header>

        <nav className="flex h-16 shrink-0 items-start justify-between pl-[5px] pr-4 pt-[7px]">
          <div className="flex">{fileTools.map((t) => <ToolButton key={t.label} {...t} />)}</div>
          <div className="flex">{viewTools.map((t) => <ToolButton key={t.label} {...t} />)}</div>
          <ToolButton label="Preferences" icon={PreferencesIcon} width="w-[62px]" />
        </nav>

        <main className="flex flex-1">
          <aside className="flex w-[317px] shrink-0 flex-col items-start pl-[5px] pt-px">
            <button
              type="button"
              className="flex h-[27px] w-20 shrink-0 items-center justify-between rounded border border-[#8a8a8a] bg-linear-to-b from-[#b4b4b4] to-[#969696] px-[6px] text-black"
            >
              Collapse
              <svg viewBox="0 0 16 16" className="h-4 w-4">
                <circle cx="8" cy="8" r="7" fill="#f2f2f2" stroke="#444" />
                <path d="M8 4L4.5 8 8 12M12 4L8.5 8l3.5 4" fill="none" stroke="#222" strokeWidth="1.5" />
              </svg>
            </button>
            <div className="-mt-[23px]">
              {measurements.map((m) => (
                <MeasurementCard key={m.id} item={m} active={m.id === selected} onSelect={() => setSelected(m.id)} />
              ))}
            </div>
          </aside>

          <div className="mb-[101px] ml-[7px] mt-[73px] flex w-4 shrink-0 flex-col border border-[#8a8a8a] bg-[#222]">
            <button type="button" aria-label="Scroll up" className="flex h-[15px] items-center justify-center bg-[#a8a8a8]">
              <Arrow d="M0 6l4-4 4 4z" />
            </button>
            <div className="flex-[125]" />
            <div className="flex-[159] bg-linear-to-r from-[#c2c2c2] to-[#9a9a9a]" />
            <div className="flex-[467]" />
            <button type="button" aria-label="Scroll down" className="flex h-[15px] items-center justify-center bg-[#a8a8a8]">
              <Arrow d="M0 2l4 4 4-4z" />
            </button>
          </div>

          <section className="flex min-w-0 flex-1 flex-col">
            <div className="flex h-[57px] shrink-0 items-start justify-between pl-2">
              <button type="button" className="flex w-[42px] flex-col items-center gap-[6px] pt-[10px] leading-[14px] text-[#c4c4c4]">
                <CameraIcon />
                Capture
              </button>
              <div className="mt-[17px] flex items-start">
                {tabs.map(([label, width]) => (
                  <button
                    key={label}
                    type="button"
                    onClick={() => setActiveTab(label)}
                    className={`whitespace-nowrap border-y border-l border-[#555] text-black last:border-r ${width} ${
                      label === activeTab ? 'h-[25px] bg-linear-to-b from-[#a5a5a5] via-[#dedede] to-[#f4f4f4]' : 'h-6 bg-linear-to-b from-[#b4b4b4] to-[#959595]'
                    }`}
                  >
                    {label}
                  </button>
                ))}
              </div>
              <div className="flex pt-[9px] [&>button]:gap-1">{chartTools.map((t) => <ToolButton key={t.label} {...t} />)}</div>
            </div>
            <div className="pb-[3px] pl-[20px] leading-[14px] text-[#c4c4c4]">SPL</div>

            <div className="flex min-h-[300px] flex-1 pr-6">
              <SplAxis />
              <Plot />
            </div>
            <div className="pr-6">
              <FreqAxis />
              <div className="ml-[44px] flex h-4 border border-[#8a8a8a] bg-[#222]">
                <button type="button" aria-label="Scroll left" className="flex w-[15px] items-center justify-center bg-[#a8a8a8]">
                  <Arrow d="M6 0L2 4l4 4z" />
                </button>
                <div className="flex-[389]" />
                <div className="flex-[461] bg-linear-to-b from-[#bdbdbd] to-[#9a9a9a]" />
                <div className="flex-[630]" />
                <button type="button" aria-label="Scroll right" className="flex w-[15px] items-center justify-center bg-[#a8a8a8]">
                  <Arrow d="M2 0l4 4-4 4z" />
                </button>
              </div>
              <div className="my-[3px] ml-[45px] flex justify-center">
                <div className="grid w-[1256px] grid-cols-3 bg-[#101010] pb-[1px] pl-1 pr-1 pt-[4px] shadow-[0_0_4px_#101010]">
                  {measurements.map((m) => <LegendItem key={m.id} item={m} />)}
                </div>
              </div>
            </div>
          </section>
        </main>

        <footer className="flex h-[22px] shrink-0 items-stretch border-t border-[#8a8a8a] bg-[#262626] leading-[21px] text-[#c4c4c4] [&>span]:whitespace-nowrap [&>span]:border-r [&>span]:border-[#8a8a8a]">
          <span className="w-[88px] pl-[3px]">208/324MB</span>
          <span className="w-[58px] text-center">44.1 kHz</span>
          <span className="w-[117px] pl-[5px]">16-bit in, 24-bit out</span>
          <span className="flex w-[270px] justify-between px-[5px] font-['DejaVu_Sans',sans-serif] text-[10px] text-[#12803a]">
            <i className="not-italic">XXXX XXXX</i>
            <i className="not-italic">XXXX XXXX</i>
            <i className="not-italic">XXXX XXXX</i>
            <i className="not-italic text-[#6d7cf5]">0000 0000</i>
          </span>
          <span className="w-[70px] text-center">24-bit data</span>
          <span className="w-[288px] pl-[5px]">Peak input before clipping 120 dB SPL (uncalibrated)</span>
          <span className="flex-1" />
          <div className="w-[205px]" />
        </footer>
      </div>
    </div>
  );
};

export default App;
